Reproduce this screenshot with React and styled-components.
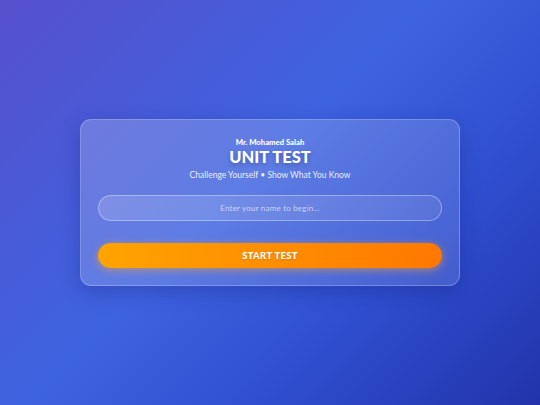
import styled, { createGlobalStyle } from 'styled-components';

const GlobalStyle = createGlobalStyle`
  * { box-sizing: border-box; }
  html, body { margin: 0; height: 100%; }
  body {
    font-family: Lato, "Noto Sans", sans-serif;
    background: linear-gradient(135deg, #5650cc 0%, #3e63e0 45%, #2f4fd0 70%, #2233aa 100%);
    min-height: 405px;
  }
  #root { min-height: 405px; }
`

const Page = styled.div`
  min-height: 405px;
  display: flex;
  align-items: center;
  justify-content: center;
`

const Card = styled.div`
  width: 380px;
  padding: 16px 17px 17px;
  border-radius: 11px;
  background: linear-gradient(135deg, rgba(255,255,255,0.2), rgba(255,255,255,0.12));
  border: 1px solid rgba(255,255,255,0.22);
  box-shadow: 0 6px 20px rgba(20, 30, 120, 0.3);
  display: flex;
  flex-direction: column;
  align-items: center;
  color: #fff;
`

const Teacher = styled.div`
  font-size: 7.7px;
  font-weight: 900;
  line-height: 10px;
  margin-top: 1px;
`

const Title = styled.h1`
  margin: 0;
  font-size: 16.5px;
  font-weight: 900;
  line-height: 20px;
  text-shadow: 0 2px 4px rgba(0,0,0,0.25);
`

const Tagline = styled.p`
  margin: 2px 0 0;
  font-size: 8.5px;
  line-height: 12px;
  color: rgba(255,255,255,0.9);
`

const NameInput = styled.input`
  margin-top: 14px;
  width: 100%;
  height: 26px;
  border-radius: 13px;
  border: 1px solid rgba(255,255,255,0.35);
  background: linear-gradient(135deg, rgba(255,255,255,0.16), rgba(255,255,255,0.08));
  color: #fff;
  font-family: inherit;
  font-size: 8px;
  letter-spacing: 0.2px;
  text-align: center;
  outline: none;
  &::placeholder { color: rgba(255,255,255,0.65); }
`

const StartButton = styled.button`
  margin-top: 22px;
  width: 100%;
  height: 25px;
  border: none;
  border-radius: 13px;
  background: linear-gradient(90deg, #ffa400 0%, #ff8c00 55%, #ff7800 100%);
  box-shadow: 0 2px 8px rgba(255, 160, 40, 0.55);
  color: #fff;
  font-family: inherit;
  font-size: 9.5px;
  font-weight: 900;
  letter-spacing: 0.3px;
  text-shadow: 0 1px 2px rgba(0,0,0,0.15);
`

export default function App() {
  return (
    <Page>
      <GlobalStyle />
      <Card>
        <Teacher>Mr. Mohamed Salah</Teacher>
        <Title>UNIT TEST</Title>
        <Tagline>Challenge Yourself • Show What You Know</Tagline>
        <NameInput placeholder="Enter your name to begin..." />
        <StartButton>START TEST</StartButton>
      </Card>
    </Page>
  );
}
